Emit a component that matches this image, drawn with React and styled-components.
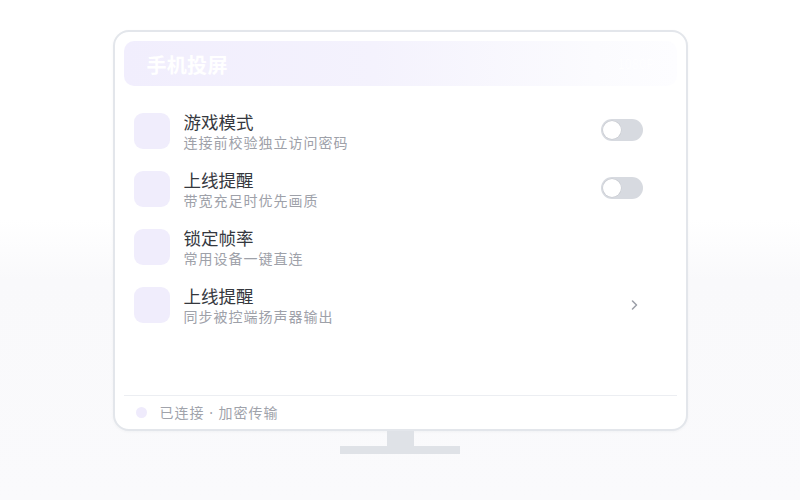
import React from 'react';
import styled, { createGlobalStyle } from 'styled-components';

const GlobalStyle = createGlobalStyle`
  html, body {
    margin: 0;
    padding: 0;
  }
  body {
    width: 800px;
    height: 500px;
    overflow: hidden;
    font-family: "Noto Sans CJK SC", "Noto Sans", sans-serif;
    background: linear-gradient(180deg, #ffffff 0%, #ffffff 44%, #f9f9fb 56%, #fafafc 100%);
  }
`;

const settings = [
  { title: '游戏模式', desc: '连接前校验独立访问密码', control: 'toggle' },
  { title: '上线提醒', desc: '带宽充足时优先画质', control: 'toggle' },
  { title: '锁定帧率', desc: '常用设备一键直连', control: null },
  { title: '上线提醒', desc: '同步被控端扬声器输出', control: 'chevron' },
];

const App = () => {
  return (
    <>
      <GlobalStyle />
      <Page>
        <Monitor>
          <Header>
            <HeaderTitle>手机投屏</HeaderTitle>
            <HeaderExtra>1080P</HeaderExtra>
          </Header>
          <List>
            {settings.map((item, i) => (
              <Row key={i}>
                <IconTile />
                <TextBlock>
                  <RowTitle>{item.title}</RowTitle>
                  <RowDesc>{item.desc}</RowDesc>
                </TextBlock>
                {item.control === 'toggle' && (
                  <Toggle>
                    <Knob />
                  </Toggle>
                )}
                {item.control === 'chevron' && (
                  <Chevron width="7" height="10" viewBox="0 0 7 10">
                    <polyline points="1.5,1 5.5,5 1.5,9" fill="none" stroke="#9a9ea7" strokeWidth="1.5" strokeLinecap="round" strokeLinejoin="round" />
                  </Chevron>
                )}
              </Row>
            ))}
          </List>
          <Footer>
            <StatusDot />
            <FooterText>已连接 · 加密传输</FooterText>
          </Footer>
        </Monitor>
        <Neck />
        <Base />
      </Page>
    </>
  );
};

export default App;

const Page = styled.div`
  display: flex;
  flex-direction: column;
  align-items: center;
  padding-top: 30px;
`;

const Monitor = styled.div`
  box-sizing: border-box;
  width: 575px;
  height: 401px;
  border: 2px solid #e3e6eb;
  border-radius: 16px;
  background: #ffffff;
  padding: 9px 9px 0;
  display: flex;
  flex-direction: column;
  box-shadow: 0 1px 3px rgba(30, 40, 60, 0.04);
`;

const Header = styled.div`
  height: 45px;
  border-radius: 10px;
  background: linear-gradient(90deg, #f1eefd 0%, #f4f2fd 45%, #fbfbfe 85%, #fdfdff 100%);
  display: flex;
  align-items: center;
  justify-content: space-between;
  padding: 0 22px 0 23px;
`;

const HeaderTitle = styled.div`
  font-size: 20px;
  font-weight: 700;
  color: #ffffff;
  line-height: 24px;
  margin-top: 3px;
  letter-spacing: 0.3px;
`;

const HeaderExtra = styled.div`
  font-size: 13px;
  color: #ffffff;
  opacity: 0.9;
`;

const List = styled.div`
  display: flex;
  flex-direction: column;
  gap: 16px;
  padding: 27px 34px 0 10px;
`;

const Row = styled.div`
  display: flex;
  align-items: flex-start;
  height: 42px;
`;

const IconTile = styled.div`
  width: 36px;
  height: 36px;
  border-radius: 9px;
  background: #f0edfc;
  flex-shrink: 0;
`;

const TextBlock = styled.div`
  margin-left: 14px;
  margin-top: -2px;
  flex: 1;
  display: flex;
  flex-direction: column;
`;

const RowTitle = styled.div`
  font-size: 17.5px;
  line-height: 21px;
  color: #35383e;
`;

const RowDesc = styled.div`
  font-size: 14px;
  line-height: 21px;
  letter-spacing: 1px;
  color: #9ea1a9;
`;

const Toggle = styled.div`
  position: relative;
  width: 42px;
  height: 22px;
  border-radius: 11px;
  background: #d7dae0;
  margin-top: 6px;
  flex-shrink: 0;
`;

const Knob = styled.div`
  position: absolute;
  left: 2px;
  top: 2px;
  width: 18px;
  height: 18px;
  border-radius: 50%;
  background: #ffffff;
  box-shadow: 0 0 0 0.5px rgba(0, 0, 0, 0.08);
`;

const Chevron = styled.svg`
  margin-top: 13px;
  margin-right: 5px;
  flex-shrink: 0;
`;

const Footer = styled.div`
  margin-top: auto;
  height: 33px;
  border-top: 1px solid #eceef2;
  display: flex;
  align-items: center;
  padding-left: 12px;
  gap: 13px;
`;

const StatusDot = styled.div`
  width: 11px;
  height: 11px;
  border-radius: 50%;
  background: #efebfc;
`;

const FooterText = styled.div`
  font-family: "Noto Sans", "Noto Sans CJK SC", sans-serif;
  font-size: 14px;
  letter-spacing: 1px;
  color: #a0a3ab;
  line-height: 18px;
`;

const Neck = styled.div`
  width: 27px;
  height: 15px;
  background: #dfe2e7;
`;

const Base = styled.div`
  width: 120px;
  height: 8px;
  background: #dfe2e7;
`;
